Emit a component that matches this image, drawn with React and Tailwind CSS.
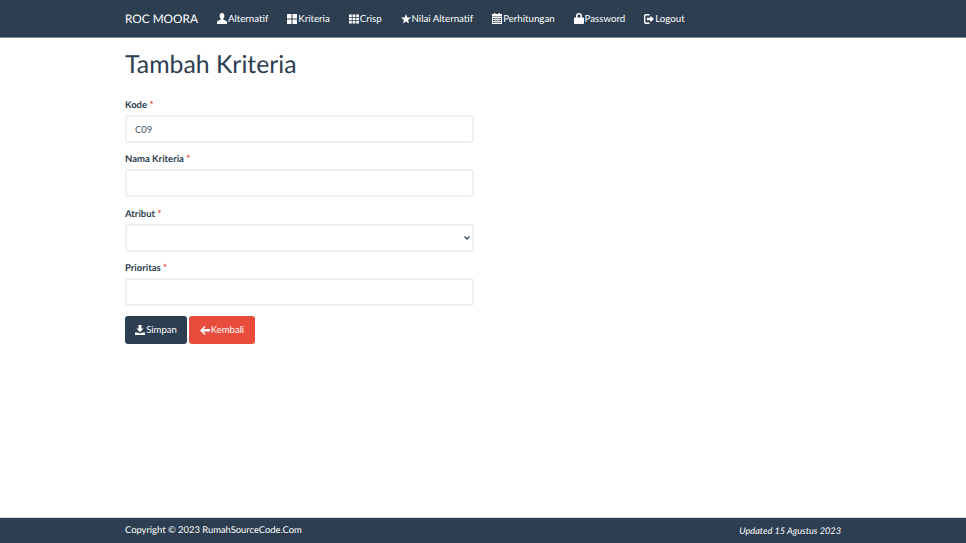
import React from 'react';

const UserIcon = () => (
  <svg width="10" height="11" viewBox="0 0 10 11" fill="currentColor"><path d="M5 0C3.400 0 2.600 1.200 2.600 2.800c0 1.200.5 2.300 1.200 2.900v.9L.6 8C.1 8.200 0 8.600 0 9v2h10V9c0-.4-.1-.8-.6-1L6.200 6.600v-.9c.7-.6 1.200-1.700 1.200-2.900C7.400 1.200 6.600 0 5 0z" /></svg>
);
const GridLarge = () => (
  <svg width="10" height="10" viewBox="0 0 10 10" fill="currentColor"><path d="M0 0h4.500v4.500H0zM5.500 0H10v4.500H5.500zM0 5.500h4.500V10H0zM5.500 5.500H10V10H5.500z" /></svg>
);
const GridSmall = () => (
  <svg width="10" height="10" viewBox="0 0 10 10" fill="currentColor"><path d="M0 .5h2.800v2.600H0zM3.600 .5h2.800v2.600H3.600zM7.200 .5H10v2.600H7.200zM0 3.800h2.800v2.400H0zM3.600 3.800h2.800v2.400H3.600zM7.200 3.800H10v2.400H7.200zM0 6.900h2.800v2.600H0zM3.600 6.900h2.800v2.600H3.600zM7.200 6.900H10v2.600H7.200z" /></svg>
);
const StarIcon = () => (
  <svg width="10" height="10" viewBox="0 0 10 10" fill="currentColor"><path d="M5 0l1.300 3.400 3.700.2-2.900 2.300.9 3.700L5 7.600 2 9.600l.9-3.700L0 3.600l3.700-.2z" /></svg>
);
const CalendarIcon = () => (
  <svg width="10" height="11" viewBox="0 0 10 11" fill="currentColor"><path d="M2 0h1.400v1H6.600V0H8v1h2v2.400H0V1h2zM0 4h10v7H0zm1 1v1.200h1.600V5zm2.400 0v1.200h1.200V5zm2 0v1.200h1.200V5zm2 0v1.200H9V5zM1 7v1.200h1.600V7zm2.400 0v1.200h1.200V7zm2 0v1.200h1.200V7zm2 0v1.200H9V7zM1 9v1h1.600V9zm2.400 0v1h1.200V9zm2 0v1h1.200V9zm2 0v1H9V9z" fillRule="evenodd" /></svg>
);
const LockIcon = () => (
  <svg width="10" height="11" viewBox="0 0 10 11" fill="currentColor"><path d="M5 0C3.200 0 2 1.200 2 3v1.500H1c-.6 0-1 .4-1 1V10c0 .6.4 1 1 1h8c.6 0 1-.4 1-1V5.500c0-.6-.4-1-1-1H8V3C8 1.200 6.800 0 5 0zm0 1.400c1 0 1.500.6 1.500 1.600v1.500h-3V3c0-1 .5-1.600 1.500-1.600z" fillRule="evenodd" /></svg>
);
const LogoutIcon = () => (
  <svg width="10" height="10" viewBox="0 0 10 10" fill="currentColor"><path d="M2 0h3.500v1.400H2.200c-.5 0-.8.3-.8.8v5.600c0 .5.3.8.8.8h3.300V10H2c-1.200 0-2-.8-2-2V2C0 .8.800 0 2 0zM6.400 1.800L10 5 6.400 8.200V6.200H3V3.800h3.400z" /></svg>
);
const SaveIcon = () => (
  <svg width="10" height="10" viewBox="0 0 10 10" fill="currentColor"><path d="M3.500 0h3v3.600h2L5 7.200 1.500 3.600h2zM0 7.400h2.400L5 8.600l2.600-1.200H10V10H0z" /></svg>
);
const ArrowLeftIcon = () => (
  <svg width="10" height="9" viewBox="0 0 10 9" fill="currentColor"><path d="M4.600 0l.9.9-2 2.200H10v2.400H3.500l2 2.600-.9.9L0 4.400z" /></svg>
);

const menu = [
  { label: 'Alternatif', icon: <UserIcon /> },
  { label: 'Kriteria', icon: <GridLarge /> },
  { label: 'Crisp', icon: <GridSmall /> },
  { label: 'Nilai Alternatif', icon: <StarIcon /> },
  { label: 'Perhitungan', icon: <CalendarIcon /> },
  { label: 'Password', icon: <LockIcon /> },
  { label: 'Logout', icon: <LogoutIcon /> },
];

const Label = ({ children }) => (
  <label className="block h-[17px] text-[9.500px] leading-[16px] font-bold text-[#2c3e50]">
    {children} <span className="text-[#e74c3c]">*</span>
  </label>
);

const inputClass = "block w-full h-[28px] rounded-[3px] border-2 border-[#ecf0f1] bg-white px-[8px] text-[9.500px] text-[#44566a] outline-none";

const App = () => {
  return (
    <div className="flex flex-col min-h-[543px] bg-white font-['Lato','Noto_Sans',sans-serif] text-[#2c3e50] [text-rendering:geometricPrecision]">
      {/* Navbar */}
      <nav className="h-[38px] bg-[#2c3e50] border-b border-[#7b8794] text-white">
        <div className="flex items-center h-[37px] pt-[1px] pl-[125px]">
          <span className="text-[11.800px] mr-[19px]">ROC MOORA</span>
          <div className="flex items-center gap-[18.950px]">
            {menu.map((m) => (
              <a key={m.label} href="#" className="flex items-center gap-[1px] text-[9.700px]">
                {m.icon}
                <span>{m.label}</span>
              </a>
            ))}
          </div>
        </div>
      </nav>

      {/* Content */}
      <main className="flex-1 pl-[125px]">
        <h1 className="text-[24.800px] leading-[29px] font-normal mt-[12px] mb-[19px]">Tambah Kriteria</h1>
        <form className="w-[349px] flex flex-col gap-[9.400px]">
          <div>
            <Label>Kode</Label>
            <input className={inputClass} defaultValue="C09" />
          </div>
          <div>
            <Label>Nama Kriteria</Label>
            <input className={inputClass} />
          </div>
          <div>
            <Label>Atribut</Label>
            <div className="relative">
              <select className={`${inputClass} appearance-none`}>
                <option></option>
              </select>
              <svg className="absolute right-[4px] top-[12px]" width="6" height="4" viewBox="0 0 6 4" fill="none" stroke="#34495e" strokeWidth="1.400"><path d="M.5.5L3 3 5.500.5" /></svg>
            </div>
          </div>
          <div>
            <Label>Prioritas</Label>
            <input className={inputClass} />
          </div>
          <div className="flex gap-[2px]">
            <button type="button" className="flex items-center gap-[1px] h-[28px] pt-[1px] w-[62px] justify-center rounded-[3px] bg-[#2c3e50] text-white text-[9.500px]">
              <SaveIcon /> Simpan
            </button>
            <button type="button" className="flex items-center gap-[1px] h-[28px] pt-[1px] w-[66px] justify-center rounded-[3px] bg-[#e74c3c] text-white text-[9.500px]">
              <ArrowLeftIcon /> Kembali
            </button>
          </div>
        </form>
      </main>

      {/* Footer */}
      <footer className="h-[26px] pt-[1px] bg-[#2c3e50] border-t border-[#d5d9dc] text-white text-[9.400px] flex items-center justify-between pl-[125px] pr-[125px]">
        <span>Copyright © 2023 RumahSourceCode.Com</span>
        <em className="text-[9.200px]">Updated 15 Agustus 2023</em>
      </footer>
    </div>
  );
};

export default App;
